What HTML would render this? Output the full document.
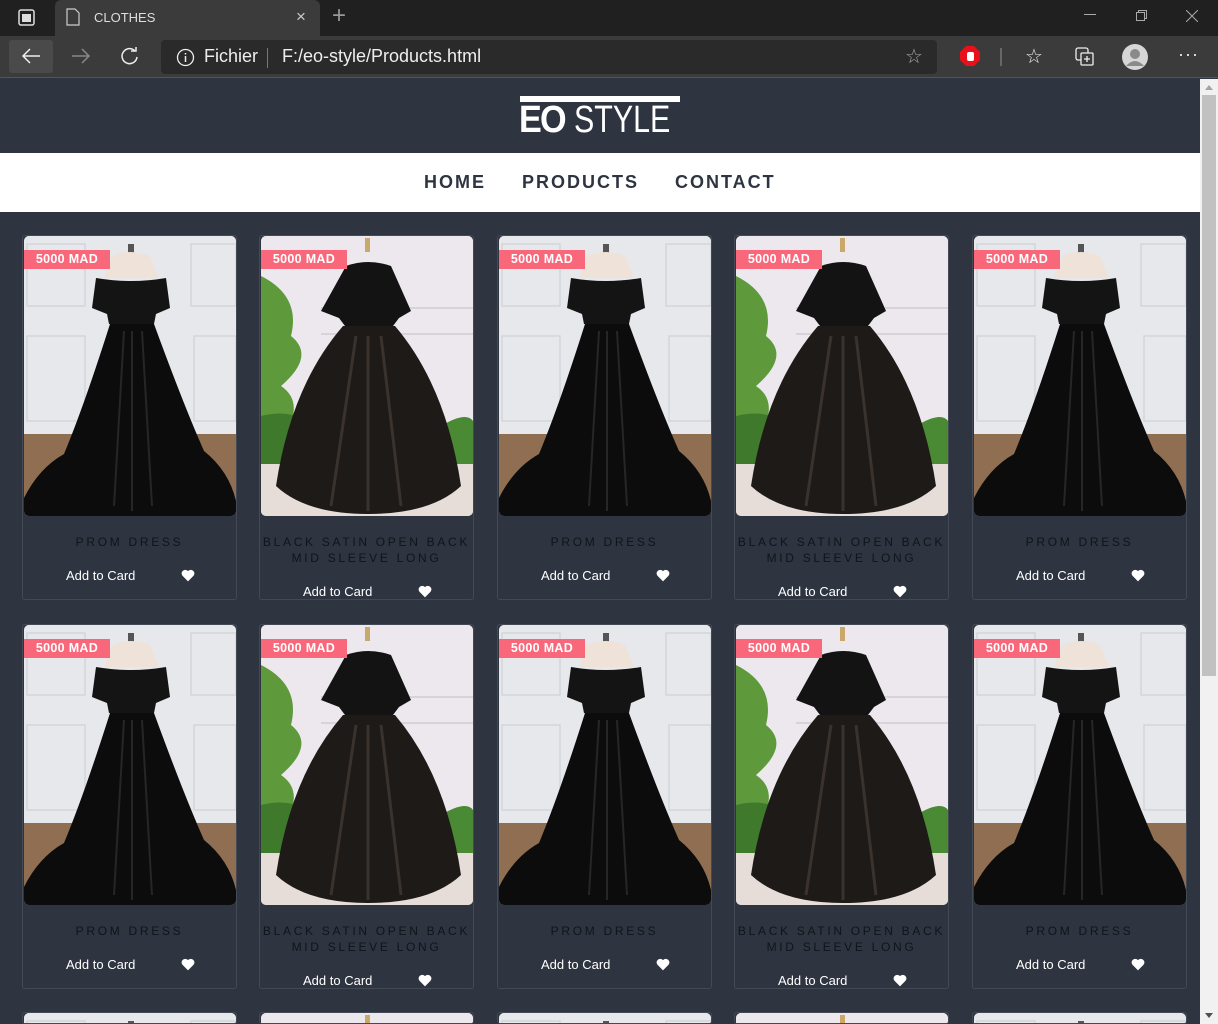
<!DOCTYPE html>
<html><head><meta charset="utf-8">
<style>
*{margin:0;padding:0;box-sizing:border-box}
html,body{width:1218px;height:1024px;overflow:hidden}
body{background:#2e3440;font-family:"Liberation Sans",sans-serif;position:relative}
.abs{position:absolute}
.tabbar{left:0;top:0;width:1218px;height:36px;background:#202020}
.tab{left:55px;top:0;width:265px;height:36px;background:#3b3b3b;border-radius:6px 6px 0 0}
.toolbar{left:0;top:36px;width:1218px;height:42px;background:#3b3b3b;border-bottom:1px solid #555}
.url{left:161px;top:40px;width:776px;height:34px;background:#2a2a2a;border-radius:4px}
.page{left:0;top:79px;width:1200px;height:945px;background:#2e3440}
.nav{left:0;top:153px;width:1200px;height:59px;background:#fff}
.nav span{position:absolute;top:19px;font-weight:bold;font-size:18px;letter-spacing:2px;color:#2e3440}
.card{position:absolute;width:215px;height:365px;border:1px solid #434a56;border-radius:3px}
.img{position:absolute;left:1px;top:0;width:212px;height:280px;border-radius:5px;overflow:hidden}
.badge{position:absolute;left:1px;top:14px;width:86px;height:19px;background:#f9687a;color:#fff;font-weight:bold;font-size:12.5px;line-height:19px;text-align:center;letter-spacing:.3px}
.title{position:absolute;left:-10px;width:233px;top:298px;text-align:center;font-size:12px;letter-spacing:2.7px;color:#111419;line-height:16px;white-space:nowrap}
.add{position:absolute;font-size:13px;color:#fff}
.heart{position:absolute;width:14px;height:13px}
.sb{left:1200px;top:79px;width:18px;height:945px;background:#f1f1f1}
</style></head><body>
<svg width="0" height="0" style="position:absolute">
<defs>
<symbol id="dA" viewBox="0 0 212 280">
<rect width="212" height="280" fill="#e4e6ea"/>
<rect x="0" y="0" width="212" height="200" fill="#e6e8ec"/>
<rect x="3" y="8" width="58" height="62" fill="none" stroke="#d2d5da" stroke-width="1.5"/>
<rect x="167" y="8" width="45" height="62" fill="none" stroke="#d2d5da" stroke-width="1.5"/>
<rect x="3" y="100" width="58" height="85" fill="none" stroke="#d2d5da" stroke-width="1.5"/>
<rect x="170" y="100" width="42" height="85" fill="none" stroke="#d2d5da" stroke-width="1.5"/>
<rect x="0" y="198" width="212" height="82" fill="#8f6e52"/>
<path d="M104 8h6v10h-6z" fill="#555"/>
<path d="M88 20 Q107 12 126 20 L135 42 L80 42Z" fill="#efe2d8"/>
<path d="M72 42 Q107 48 142 42 L146 72 L132 78 L130 88 L85 88 L83 78 L68 72Z" fill="#141414"/>
<path d="M86 88 L130 88 Q160 170 180 215 Q205 235 212 265 L212 280 L0 280 L0 262 Q15 232 40 218 Q60 170 86 88Z" fill="#0c0c0c"/>
<path d="M100 95 L90 270 M118 95 L128 270 M108 95 L108 275" stroke="#262626" stroke-width="2"/>
</symbol>
<symbol id="dB" viewBox="0 0 212 280">
<rect width="212" height="280" fill="#ebe6ec"/>
<rect x="0" y="0" width="212" height="230" fill="#ece8ee"/>
<path d="M60 72h152M60 98h152" stroke="#d8d3da" stroke-width="2"/>
<path d="M0 40 Q40 60 30 100 Q55 120 20 150 Q50 170 10 220 L0 230Z" fill="#5e9a3c"/>
<path d="M0 180 Q40 170 60 200 L60 230 L0 235Z" fill="#3f7a2c"/>
<path d="M180 190 Q205 175 212 185 L212 240 L180 240Z" fill="#4a8a34"/>
<rect x="0" y="228" width="212" height="52" fill="#e6ddd8"/>
<path d="M104 2h5v14h-5z" fill="#c9a86a"/>
<path d="M85 30 Q107 22 130 30 L150 75 L138 82 L132 90 L84 90 L78 82 L60 75Z" fill="#131313"/>
<path d="M82 90 L134 90 Q185 150 200 250 Q170 278 107 278 Q45 278 15 250 Q30 150 82 90Z" fill="#1e1a18"/>
<path d="M95 100 L70 270 M120 100 L140 270 M107 100 L107 275" stroke="#3a322c" stroke-width="3"/>
</symbol>
<symbol id="hrt" viewBox="0 0 24 22"><path d="M12 21 L2.5 11.5 A5.5 5.5 0 0 1 12 3.5 A5.5 5.5 0 0 1 21.5 11.5Z" fill="#fff"/></symbol>
</defs></svg>

<div class="abs tabbar"></div>
<div class="abs tab"></div>
<svg class="abs" style="left:18px;top:9px" width="18" height="18"><rect x="1" y="1" width="15" height="15" rx="2" fill="none" stroke="#ddd" stroke-width="1.5"/><rect x="4" y="5" width="9" height="8" fill="#ddd"/></svg>
<svg class="abs" style="left:66px;top:8px" width="14" height="18"><path d="M1 1h8l4 4v12H1z" fill="none" stroke="#ccc" stroke-width="1.2"/></svg>
<div class="abs" style="left:94px;top:10px;font-size:13px;color:#ddd">CLOTHES</div>
<div class="abs" style="left:296px;top:7px;font-size:17px;color:#ccc">×</div>
<div class="abs" style="left:332px;top:2px;font-size:24px;color:#999;font-weight:200">+</div>
<div class="abs" style="left:1084px;top:14px;width:12px;height:1px;background:#aaa"></div>
<svg class="abs" style="left:1136px;top:10px" width="12" height="12"><rect x="0.5" y="2.5" width="8" height="8" fill="none" stroke="#aaa"/><path d="M2.5 2.5V0.5h8v8H8.5" fill="none" stroke="#aaa"/></svg>
<svg class="abs" style="left:1186px;top:10px" width="12" height="12"><path d="M0 0L12 12M12 0L0 12" stroke="#aaa"/></svg>
<div class="abs toolbar"></div>
<div class="abs" style="left:9px;top:40px;width:44px;height:33px;background:#4a4a4a;border-radius:3px"></div>
<svg class="abs" style="left:21px;top:47px" width="20" height="18"><path d="M19 9H2M9 2L2 9l7 7" fill="none" stroke="#eee" stroke-width="1.5"/></svg>
<svg class="abs" style="left:71px;top:47px" width="20" height="18"><path d="M1 9h17M11 2l7 7-7 7" fill="none" stroke="#888" stroke-width="1.5"/></svg>
<svg class="abs" style="left:120px;top:47px" width="20" height="20"><path d="M15 4 A7.5 7.5 0 1 0 17 10" fill="none" stroke="#eee" stroke-width="1.5"/><path d="M11 4h5V0" fill="none" stroke="#eee" stroke-width="1.5"/></svg>
<div class="abs url"></div>
<svg class="abs" style="left:176px;top:48px" width="19" height="19"><circle cx="9.5" cy="9.5" r="8" fill="none" stroke="#eee" stroke-width="1.3"/><path d="M9.5 8v6M9.5 5v1.5" stroke="#eee" stroke-width="1.5"/></svg>
<div class="abs" style="left:204px;top:46px;font-size:18px;color:#eee">Fichier</div>
<div class="abs" style="left:267px;top:48px;width:1px;height:20px;background:#777"></div>
<div class="abs" style="left:282px;top:46px;font-size:18px;color:#eee">F:/eo-style/Products.html</div>
<div class="abs" style="left:905px;top:44px;font-size:20px;color:#aaa">☆</div>
<svg class="abs" style="left:960px;top:46px" width="20" height="20"><polygon points="6,0 14,0 20,6 20,14 14,20 6,20 0,14 0,6" fill="#e8111b"/><rect x="7" y="6" width="7" height="9" rx="2" fill="#fff"/></svg>
<div class="abs" style="left:1000px;top:48px;width:2px;height:18px;background:#666"></div>
<div class="abs" style="left:1025px;top:44px;font-size:20px;color:#eee">☆</div>
<svg class="abs" style="left:1075px;top:47px" width="20" height="20"><rect x="1" y="1" width="12" height="12" rx="2" fill="none" stroke="#eee" stroke-width="1.3"/><rect x="6" y="6" width="12" height="12" rx="1" fill="#3b3b3b" stroke="#eee" stroke-width="1.3"/><path d="M12 9v6M9 12h6" stroke="#eee" stroke-width="1.3"/></svg>
<svg class="abs" style="left:1122px;top:44px" width="26" height="26"><circle cx="13" cy="13" r="13" fill="#d6d6d6"/><circle cx="13" cy="10" r="5" fill="#8a8a8a"/><path d="M4 22 Q13 12 22 22" fill="#8a8a8a"/></svg>
<div class="abs" style="left:1178px;top:44px;font-size:18px;color:#eee;letter-spacing:1px">···</div>

<div class="abs page"></div>
<div class="abs" style="left:520px;top:96px;width:160px;height:6px;background:#fff"></div>
<div class="abs" style="left:519px;top:103px;font-size:38px;color:#fff;font-weight:bold;letter-spacing:-2px;line-height:34px;transform:scaleX(0.9);transform-origin:left">EO</div>
<div class="abs" style="left:574px;top:103px;font-size:38px;color:#fff;line-height:34px;letter-spacing:0;transform:scaleX(0.8);transform-origin:left">STYLE</div>
<div class="abs nav"><span style="left:424px">HOME</span><span style="left:522px">PRODUCTS</span><span style="left:675px">CONTACT</span></div>

<div class="card" style="left:22px;top:235px"><svg class="img" viewBox="0 0 212 280"><use href="#dA"/></svg><div class="badge">5000 MAD</div><div class="title">PROM DRESS</div><div class="add" style="left:43px;top:332px">Add to Card</div><svg class="heart" style="left:158px;top:333px" viewBox="0 0 24 22"><use href="#hrt"/></svg></div>
<div class="card" style="left:259px;top:235px"><svg class="img" viewBox="0 0 212 280"><use href="#dB"/></svg><div class="badge">5000 MAD</div><div class="title">BLACK SATIN OPEN BACK<br>MID SLEEVE LONG</div><div class="add" style="left:43px;top:348px">Add to Card</div><svg class="heart" style="left:158px;top:349px" viewBox="0 0 24 22"><use href="#hrt"/></svg></div>
<div class="card" style="left:497px;top:235px"><svg class="img" viewBox="0 0 212 280"><use href="#dA"/></svg><div class="badge">5000 MAD</div><div class="title">PROM DRESS</div><div class="add" style="left:43px;top:332px">Add to Card</div><svg class="heart" style="left:158px;top:333px" viewBox="0 0 24 22"><use href="#hrt"/></svg></div>
<div class="card" style="left:734px;top:235px"><svg class="img" viewBox="0 0 212 280"><use href="#dB"/></svg><div class="badge">5000 MAD</div><div class="title">BLACK SATIN OPEN BACK<br>MID SLEEVE LONG</div><div class="add" style="left:43px;top:348px">Add to Card</div><svg class="heart" style="left:158px;top:349px" viewBox="0 0 24 22"><use href="#hrt"/></svg></div>
<div class="card" style="left:972px;top:235px"><svg class="img" viewBox="0 0 212 280"><use href="#dA"/></svg><div class="badge">5000 MAD</div><div class="title">PROM DRESS</div><div class="add" style="left:43px;top:332px">Add to Card</div><svg class="heart" style="left:158px;top:333px" viewBox="0 0 24 22"><use href="#hrt"/></svg></div>

<div class="card" style="left:22px;top:624px"><svg class="img" viewBox="0 0 212 280"><use href="#dA"/></svg><div class="badge">5000 MAD</div><div class="title">PROM DRESS</div><div class="add" style="left:43px;top:332px">Add to Card</div><svg class="heart" style="left:158px;top:333px" viewBox="0 0 24 22"><use href="#hrt"/></svg></div>
<div class="card" style="left:259px;top:624px"><svg class="img" viewBox="0 0 212 280"><use href="#dB"/></svg><div class="badge">5000 MAD</div><div class="title">BLACK SATIN OPEN BACK<br>MID SLEEVE LONG</div><div class="add" style="left:43px;top:348px">Add to Card</div><svg class="heart" style="left:158px;top:349px" viewBox="0 0 24 22"><use href="#hrt"/></svg></div>
<div class="card" style="left:497px;top:624px"><svg class="img" viewBox="0 0 212 280"><use href="#dA"/></svg><div class="badge">5000 MAD</div><div class="title">PROM DRESS</div><div class="add" style="left:43px;top:332px">Add to Card</div><svg class="heart" style="left:158px;top:333px" viewBox="0 0 24 22"><use href="#hrt"/></svg></div>
<div class="card" style="left:734px;top:624px"><svg class="img" viewBox="0 0 212 280"><use href="#dB"/></svg><div class="badge">5000 MAD</div><div class="title">BLACK SATIN OPEN BACK<br>MID SLEEVE LONG</div><div class="add" style="left:43px;top:348px">Add to Card</div><svg class="heart" style="left:158px;top:349px" viewBox="0 0 24 22"><use href="#hrt"/></svg></div>
<div class="card" style="left:972px;top:624px"><svg class="img" viewBox="0 0 212 280"><use href="#dA"/></svg><div class="badge">5000 MAD</div><div class="title">PROM DRESS</div><div class="add" style="left:43px;top:332px">Add to Card</div><svg class="heart" style="left:158px;top:333px" viewBox="0 0 24 22"><use href="#hrt"/></svg></div>

<div class="card" style="left:22px;top:1012px;height:12px;overflow:hidden"><svg class="img" viewBox="0 0 212 280"><use href="#dA"/></svg></div>
<div class="card" style="left:259px;top:1012px;height:12px;overflow:hidden"><svg class="img" viewBox="0 0 212 280"><use href="#dB"/></svg></div>
<div class="card" style="left:497px;top:1012px;height:12px;overflow:hidden"><svg class="img" viewBox="0 0 212 280"><use href="#dA"/></svg></div>
<div class="card" style="left:734px;top:1012px;height:12px;overflow:hidden"><svg class="img" viewBox="0 0 212 280"><use href="#dB"/></svg></div>
<div class="card" style="left:972px;top:1012px;height:12px;overflow:hidden"><svg class="img" viewBox="0 0 212 280"><use href="#dA"/></svg></div>

<div class="abs sb"></div>
<div class="abs" style="left:1202px;top:95px;width:14px;height:581px;background:#c1c1c1"></div>
<div class="abs" style="left:1205px;top:85px;width:0;height:0;border-left:4px solid transparent;border-right:4px solid transparent;border-bottom:5px solid #a3a3a3"></div>
<div class="abs" style="left:1205px;top:1013px;width:0;height:0;border-left:4px solid transparent;border-right:4px solid transparent;border-top:5px solid #505050"></div>
</body></html>
